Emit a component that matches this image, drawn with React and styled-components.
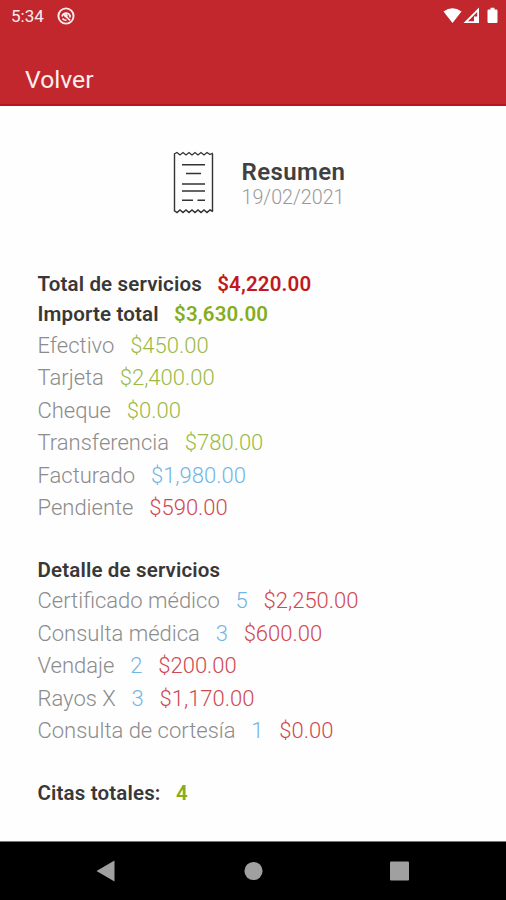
import React from 'react';
import styled, { createGlobalStyle } from 'styled-components'

const GlobalStyle = createGlobalStyle`
  * {
    box-sizing: border-box;
  }

  body {
    margin: 0;
    background: #fefefe;
    font-family: Roboto, sans-serif;
  }
`

const cores = {
  vermelho: '#c11920',
  vermelhoClaro: '#d04850',
  verde: '#86ae1b',
  verdeClaro: '#9aba45',
  azul: '#73b5e5',
}

const Tela = styled.div`
  display: flex;
  flex-direction: column;
  height: 900px;
`

const Topo = styled.header`
  display: flex;
  flex-direction: column;
  height: 106px;
  background: #c1272d;
  border-bottom: 2px solid #b9141b;
  color: #fdeeee;
`

const BarraStatus = styled.div`
  display: flex;
  align-items: center;
  height: 32px;
  padding: 0 7px 0 11px;
`

const Hora = styled.span`
  font-size: 17px;
  line-height: 32px;
  margin-right: 13px;
`

const IconesStatus = styled.div`
  display: flex;
  margin-left: auto;
`

const Voltar = styled.div`
  padding: 32px 0 0 25px;
  font-size: 24.7px;
  line-height: 32px;
`

const Conteudo = styled.main`
  flex: 1;
  padding: 44px 37.5px 0;
`

const Cabecalho = styled.div`
  display: flex;
  height: 66px;
  padding-left: 134.5px;
`

const Titulo = styled.h1`
  margin: 0;
  font-size: 24px;
  font-weight: 600;
  line-height: 30px;
  letter-spacing: 0.4px;
  color: #404040;
`

const Data = styled.div`
  font-size: 19.7px;
  font-weight: 300;
  line-height: 22px;
  color: #999;
`

const TextosCabecalho = styled.div`
  margin: 7px 0 0 27.5px;
`

const Secao = styled.section`
  margin-top: ${props => props.$margem}px;
`

const Linha = styled.div`
  display: flex;
  gap: 15.8px;
  height: 32.5px;
  font-size: 22px;
  font-weight: 300;
  line-height: 34px;
  color: #8c8c8c;
  white-space: nowrap;
`

const LinhaForte = styled(Linha)`
  gap: 15.3px;
  height: 30.4px;
  font-size: 20.5px;
  font-weight: 600;
  line-height: 32px;
  letter-spacing: 0.16px;
  color: #383838;
`

const Valor = styled.span`
  color: ${props => cores[props.$cor]};
`

const Navegacao = styled.nav`
  display: flex;
  align-items: center;
  justify-content: space-between;
  height: 59px;
  padding: 0 96px;
  background: #000;
  border-top: 1px solid #777;
`

const IconeRecibo = () => (
  <svg width="42" height="66" viewBox="0 0 42 66" fill="none" stroke="#333">
    <path d="M2.5 4V61M40.5 4V61" strokeWidth="1.4" />
    <path d="M2 4L5 2.5L8 5L11 2.5L14 5L17 2.5L20 5L23 2.5L26 5L29 2.5L32 5L35 2.5L38 4.5L41 3" strokeWidth="1.3" />
    <path d="M2 60.5L5 62.5L8 60L11 62.5L14 60L17 62.5L20 60L23 62.5L26 60L29 62.5L32 60L35 62.5L38 60L41 61.5" strokeWidth="1.5" />
    <path d="M10 14.7H33M14 23.5H29M10 34H33M10 41H33M10 50.2H21M25.5 50.2H33" strokeWidth="1.5" />
  </svg>
)

const IconeApp = () => (
  <svg width="18" height="18" viewBox="0 0 18 18" fill="none" stroke="#fdeeee">
    <circle cx="9" cy="9" r="7.6" strokeWidth="1.9" />
    <path d="M5 9.5A4.3 4.3 0 0 1 13 8.5V10.5M6.5 7L13 13.3M5.5 11.5A4.2 4.2 0 0 0 9.5 13.2" strokeWidth="1.7" />
    <circle cx="9" cy="8.8" r="1.8" fill="#fdeeee" stroke="none" />
  </svg>
)

const IconesSistema = () => (
  <svg width="56" height="18" viewBox="0 0 56 18" fill="#fff">
    <path d="M0.5 4.5Q9.5 -2 18.5 4.5L9.5 16Z" />
    <path d="M36 0.5V16H20.5ZM34.2 5L25 14.2H31V9.5H34.2Z" fillRule="evenodd" />
    <path d="M45.5 2.5H47.500V0.8H51.5V2.5H53.3Q54.5 2.500 54.5 3.7V14.8Q54.5 16 53.3 16H45.7Q44.5 16 44.5 14.8V3.7Q44.5 2.5 45.5 2.5Z" />
  </svg>
)

const pagamentos = [
  ['Efectivo', '$450.00', 'verdeClaro'],
  ['Tarjeta', '$2,400.00', 'verdeClaro'],
  ['Cheque', '$0.00', 'verdeClaro'],
  ['Transferencia', '$780.00', 'verdeClaro'],
  ['Facturado', '$1,980.00', 'azul'],
  ['Pendiente', '$590.00', 'vermelhoClaro'],
]

const servicos = [
  ['Certificado médico', 5, '$2,250.00'],
  ['Consulta médica', 3, '$600.00'],
  ['Vendaje', 2, '$200.00'],
  ['Rayos X', 3, '$1,170.00'],
  ['Consulta de cortesía', 1, '$0.00'],
]

export default class App extends React.Component {
  render() {
    return (
      <Tela>
        <GlobalStyle />
        <Topo>
          <BarraStatus>
            <Hora>5:34</Hora>
            <IconeApp />
            <IconesStatus><IconesSistema /></IconesStatus>
          </BarraStatus>
          <Voltar>Volver</Voltar>
        </Topo>

        <Conteudo>
          <Cabecalho>
            <IconeRecibo />
            <TextosCabecalho>
              <Titulo>Resumen</Titulo>
              <Data>19/02/2021</Data>
            </TextosCabecalho>
          </Cabecalho>

          <Secao $margem={52}>
            <LinhaForte>
              <span>Total de servicios</span>
              <Valor $cor="vermelho">$4,220.00</Valor>
            </LinhaForte>
            <LinhaForte>
              <span>Importe total</span>
              <Valor $cor="verde">$3,630.00</Valor>
            </LinhaForte>
            {pagamentos.map(([nome, valor, cor]) => (
              <Linha key={nome}>
                <span>{nome}</span>
                <Valor $cor={cor}>{valor}</Valor>
              </Linha>
            ))}
          </Secao>

          <Secao $margem={30}>
            <LinhaForte>Detalle de servicios</LinhaForte>
            {servicos.map(([nome, quantidade, valor]) => (
              <Linha key={nome}>
                <span>{nome}</span>
                <Valor $cor="azul">{quantidade}</Valor>
                <Valor $cor="vermelhoClaro">{valor}</Valor>
              </Linha>
            ))}
          </Secao>

          <Secao $margem={30.5}>
            <LinhaForte>
              <span>Citas totales:</span>
              <Valor $cor="verde">4</Valor>
            </LinhaForte>
          </Secao>
        </Conteudo>

        <Navegacao>
          <svg width="19" height="22" viewBox="0 0 19 22"><path d="M0.5 11L18.5 0.5V21.5Z" fill="#a0a0a0" /></svg>
          <svg width="20" height="20" viewBox="0 0 20 20"><circle cx="10.5" cy="10" r="9.1" fill="#a0a0a0" /></svg>
          <svg width="20" height="20" viewBox="0 0 20 20"><rect x="0" y="0.5" width="19" height="19" rx="1" fill="#a0a0a0" /></svg>
        </Navegacao>
      </Tela>
    )
  }
}
